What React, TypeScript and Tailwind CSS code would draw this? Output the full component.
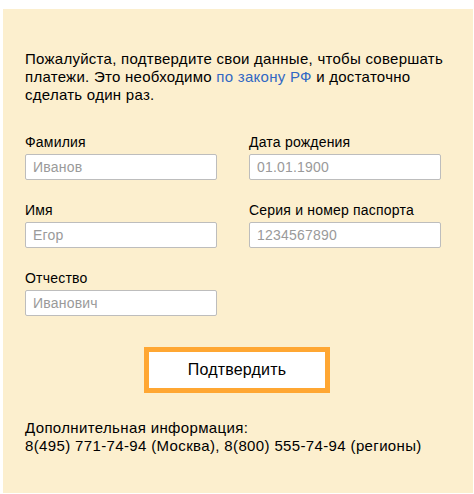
import React from "react";

function Field({ label, placeholder }: { label: string; placeholder: string }) {
  return (
    <div className="flex flex-col">
      <label className="text-[14px] leading-[16px] tracking-[0.2px] text-black">{label}</label>
      <input
        className="mt-[4px] h-[26px] w-[192px] rounded-[2px] border border-[#bdbdbd] bg-white pl-[7px] text-[14px] tracking-[0.2px] text-black outline-none placeholder:text-[#9a9a9a]"
        placeholder={placeholder}
      />
    </div>
  );
}

export default function App() {
  return (
    <div className="bg-white w-[474px] h-[494px]" style={{ fontFamily: '"Liberation Sans", Arial, sans-serif' }}>
      <div className="ml-[3px] pt-[9px]">
        <div className="w-[470px] h-[484px] bg-[#fcefce] pl-[22px] pt-[41px] text-black">
          <p className="text-[15px] leading-[18px] tracking-[0.27px] w-[440px]">
            Пожалуйста, подтвердите свои данные, чтобы совершать платежи. Это необходимо{" "}
            <a className="text-[#3168c4]" href="#">по закону РФ</a> и достаточно сделать один раз.
          </p>
          <div className="mt-[30px] grid grid-cols-[192px_192px] gap-x-[32px] gap-y-[22px]">
            <Field label="Фамилия" placeholder="Иванов" />
            <Field label="Дата рождения" placeholder="01.01.1900" />
            <Field label="Имя" placeholder="Егор" />
            <Field label="Серия и номер паспорта" placeholder="1234567890" />
            <Field label="Отчество" placeholder="Иванович" />
          </div>
          <div className="mt-[31px] pl-[119px]">
            <button className="h-[46px] w-[186px] border-[5px] border-[#ffa733] bg-white text-[16px] tracking-[0.2px] text-black">
              Подтвердить
            </button>
          </div>
          <p className="mt-[26px] text-[15px] leading-[18px] tracking-[0.36px]">
            Дополнительная информация:
            <br />
            8(495) 771-74-94 (Москва), 8(800) 555-74-94 (регионы)
          </p>
        </div>
      </div>
    </div>
  );
}
